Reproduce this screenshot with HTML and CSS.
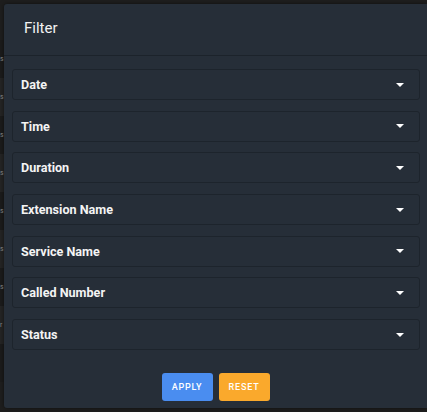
FILE: index.html
```html
<!DOCTYPE html>
<html lang="en">
  <head>
    <meta charset="UTF-8" />
    <meta name="viewport" content="width=device-width, initial-scale=1.0" />
    <title>Filter</title>
    <link rel="stylesheet" href="styles.css">
  </head>
  <body>
    <div class="backdrop">
      <div class="row">s</div>
      <div class="row alt">s</div>
      <div class="row">s</div>
      <div class="row alt">s</div>
      <div class="row">s</div>
      <div class="row alt">s</div>
      <div class="row">s</div>
      <div class="row alt">r</div>
      <div class="row"></div>
    </div>

    <div class="modal">
      <div class="modal-header">Filter</div>
      <div class="modal-body">
        <div class="item"><span>Date</span><i class="caret"></i></div>
        <div class="item"><span>Time</span><i class="caret"></i></div>
        <div class="item"><span>Duration</span><i class="caret"></i></div>
        <div class="item"><span>Extension Name</span><i class="caret"></i></div>
        <div class="item"><span>Service Name</span><i class="caret"></i></div>
        <div class="item"><span>Called Number</span><i class="caret"></i></div>
        <div class="item"><span>Status</span><i class="caret"></i></div>
      </div>
      <div class="modal-footer">
        <button class="btn btn-apply">APPLY</button>
        <button class="btn btn-reset">RESET</button>
      </div>
    </div>
  </body>
</html>
```

FILE: styles.css
```css
body {
  margin: 0;
  height: 412px;
  background-color: #1e1e1e;
  font-family: Roboto, "Liberation Sans", sans-serif;
  overflow: hidden;
}

.backdrop {
  height: 372px;
  padding-top: 40px;
  overflow: hidden;
}

.row {
  height: 38px;
  line-height: 38px;
  font-size: 7px;
  color: #8a8a8a;
  background-color: #1b1b1b;
}

.row.alt {
  background-color: #242424;
}

.modal {
  position: absolute;
  top: 4px;
  left: 4px;
  width: 423px;
  height: 404px;
  background-color: #262e38;
  border-radius: 3px 0 0 3px;
  box-shadow: 0 0 4px rgba(0, 0, 0, 0.5);
}

.modal-header {
  height: 51px;
  line-height: 48px;
  padding-left: 20px;
  font-size: 15px;
  color: #f2f2f2;
  border-bottom: 1px solid #1c232b;
}

.modal-body {
  padding: 13px 7px 0 8px;
  display: flex;
  flex-direction: column;
  gap: 10.7px;
}

.item {
  height: 29px;
  display: flex;
  align-items: center;
  justify-content: space-between;
  padding: 0 15px 0 8px;
  border: 1px solid #1d242c;
  border-radius: 3px;
  font-size: 12.6px;
  font-weight: bold;
  color: #f4f4f4;
}

.caret {
  width: 0;
  height: 0;
  border-left: 4px solid transparent;
  border-right: 4px solid transparent;
  border-top: 4px solid #ffffff;
}

.modal-footer {
  display: flex;
  justify-content: center;
  gap: 6px;
  padding-top: 23px;
}

.btn {
  width: 51px;
  height: 28px;
  border: none;
  border-radius: 3px;
  color: white;
  font-family: Roboto, "Liberation Sans", sans-serif;
  font-size: 9px;
  font-weight: 500;
  letter-spacing: 0.8px;
  padding: 0;
  cursor: pointer;
}

.btn-apply {
  background-color: #4a8df0;
}

.btn-reset {
  background-color: #faa92c;
}
```
